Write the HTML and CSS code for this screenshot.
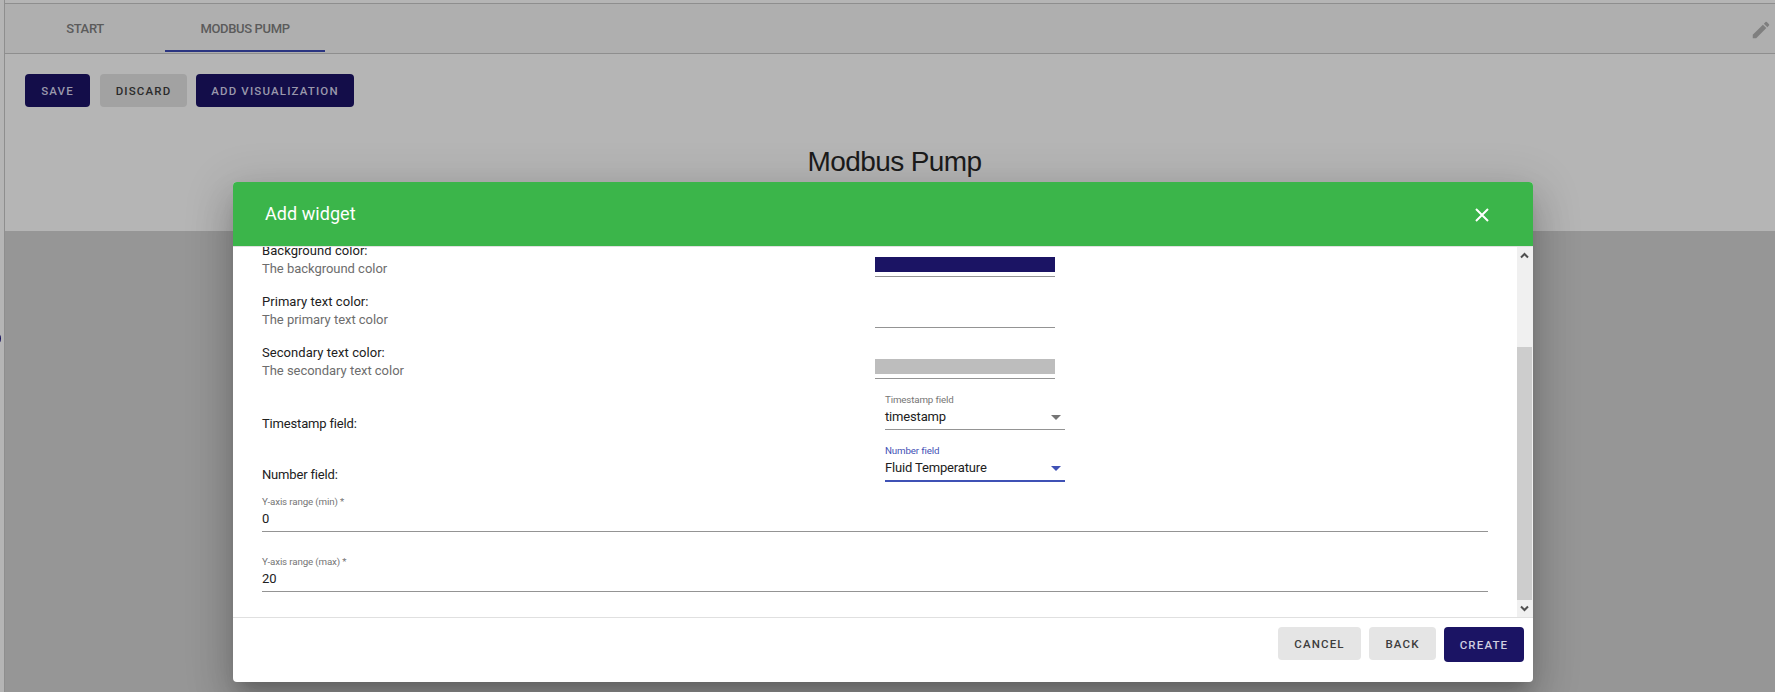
FILE: index.html
```html
<!DOCTYPE html>
<html lang="en">
<head>
<meta charset="utf-8">
<title>Modbus Pump</title>
<link rel="stylesheet" href="styles.css">
</head>
<body>
<div class="page">
  <span class="edge-mark"></span>
  <nav class="tabs">
    <div class="tab start"><span>START</span></div>
    <div class="tab active"><span>MODBUS PUMP</span></div>
    <svg class="edit" viewBox="0 0 24 24"><path d="M3 17.25V21h3.75L17.81 9.94l-3.75-3.75L3 17.25zM20.71 7.04a1 1 0 0 0 0-1.41l-2.34-2.34a1 1 0 0 0-1.41 0l-1.83 1.83 3.75 3.75 1.83-1.83z"/></svg>
  </nav>
  <div class="toolbar">
    <button class="btn dim-primary save"><span>SAVE</span></button>
    <button class="btn dim-basic discard"><span>DISCARD</span></button>
    <button class="btn dim-primary add"><span>ADD VISUALIZATION</span></button>
  </div>
  <h1 class="title"><span>Modbus Pump</span></h1>
  <div class="canvas"></div>
</div>

<div class="dialog">
  <header class="dialog-head">
    <h2><span>Add widget</span></h2>
    <svg class="close" viewBox="0 0 14 14"><path d="M1 1l12 12M13 1L1 13"/></svg>
  </header>
  <div class="dialog-body">
    <div class="form">
      <div class="row">
        <div class="label"><b>Background color:</b><i>The background color</i></div>
        <div class="color"><div class="swatch navy"></div></div>
      </div>
      <div class="row">
        <div class="label"><b>Primary text color:</b><i>The primary text color</i></div>
        <div class="color"><div class="swatch white"></div></div>
      </div>
      <div class="row">
        <div class="label"><b>Secondary text color:</b><i>The secondary text color</i></div>
        <div class="color"><div class="swatch gray"></div></div>
      </div>
      <div class="row">
        <div class="label single"><b>Timestamp field:</b></div>
        <div class="select"><small>Timestamp field</small><div class="value"><span>timestamp</span><em class="arrow"></em></div></div>
      </div>
      <div class="row">
        <div class="label single"><b>Number field:</b></div>
        <div class="select focused"><small>Number field</small><div class="value"><span>Fluid Temperature</span><em class="arrow"></em></div></div>
      </div>
      <div class="input"><small>Y-axis range (min) *</small><span>0</span></div>
      <div class="input"><small>Y-axis range (max) *</small><span>20</span></div>
    </div>
    <div class="scrollbar">
      <svg viewBox="0 0 9 7"><path d="M1 5.5l3.5-3.5L8 5.5"/></svg>
      <div class="thumb"></div>
      <svg viewBox="0 0 9 7"><path d="M1 1.5L4.500 5L8 1.500"/></svg>
    </div>
  </div>
  <footer class="dialog-foot">
    <button class="btn basic cancel"><span>CANCEL</span></button>
    <button class="btn basic back"><span>BACK</span></button>
    <button class="btn primary create"><span>CREATE</span></button>
  </footer>
</div>
</body>
</html>
```
FILE: styles.css
```css
* { box-sizing: border-box; }
body { margin: 0; width: 1775px; height: 692px; overflow: hidden; background: #b5b5b5; font-family: Roboto, sans-serif; position: relative; }
.page { margin: 0 0 0 4px; height: 692px; border-left: 1px solid #8e8e8e; display: flex; flex-direction: column; padding-top: 3px; }
.edge-mark { position: absolute; left: -5px; top: 334px; width: 6px; height: 9px; border-radius: 50%; background: #16105a; }
.tabs { height: 51px; flex: none; background: #afafaf; border-top: 1px solid #8e8e8e; border-bottom: 1px solid #8e8e8e; display: flex; align-items: flex-start; }
.tab { width: 160px; height: 48px; display: flex; align-items: center; justify-content: center; font-size: 13px; font-weight: 500; color: #5b5b5b; letter-spacing: -.35px; }
.tab.active { border-bottom: 2px solid #2b3581; padding-top: 2px; }
.edit { width: 22px; height: 22px; margin: 15px 3px 0 auto; fill: #7f7f7f; }
.toolbar { display: flex; padding: 20px 0 0 20px; }
.btn { border: 0; border-radius: 4px; height: 33px; padding: 0; display: flex; align-items: center; justify-content: center; font: 500 11.5px Roboto, sans-serif; letter-spacing: 1.15px; white-space: nowrap; }
.dim-primary { background: #130d49; color: #9a98ac; }
.dim-basic { background: #a2a2a2; color: #2b2b2b; }
.save { width: 65px; }
.discard { width: 87px; margin-left: 10px; }
.add { width: 158px; margin-left: 9px; }
.title { margin: 38px 0 0; padding-left: 9px; height: 34px; text-align: center; font: 400 28px/34px "Liberation Sans", sans-serif; letter-spacing: -.6px; color: #1b1b1b; }
.canvas { margin-top: 52px; flex: 1; background: #969696; }

.dialog { position: absolute; left: 233px; top: 182px; width: 1300px; height: 500px; border-radius: 4px; overflow: hidden; background: #fff; display: flex; flex-direction: column; box-shadow: 0 11px 15px -7px rgba(0,0,0,.2), 0 24px 38px 3px rgba(0,0,0,.14), 0 9px 46px 8px rgba(0,0,0,.12); }
.dialog-head { height: 65px; flex: none; background: #3bb54a; border-bottom: 1px solid #e0e0e0; display: flex; justify-content: space-between; padding: 0 44.5px 0 32px; }
h2 { margin: 20px 0 0; font: 400 18px/24px Roboto, sans-serif; color: #fff; letter-spacing: .05px; }
.close { width: 14px; height: 14px; margin-top: 26px; stroke: #fff; stroke-width: 2; fill: none; }
.dialog-body { height: 370px; flex: none; overflow: hidden; display: flex; justify-content: space-between; }
.form { width: 1255px; padding-left: 29px; margin-top: -5px; }
.row { height: 51px; display: grid; grid-template-columns: 613px 1fr; }
.label { font-size: 13px; line-height: 18px; letter-spacing: .05px; }
.label b, .label i { display: block; font-weight: 400; font-style: normal; color: #212121; }
.label i { color: #6d6d6d; letter-spacing: -.03px; }
.label.single { padding-top: 20px; letter-spacing: -.17px; }
.color { width: 180px; height: 35px; border-bottom: 1px solid #949494; padding-top: 15px; }
.swatch { height: 15px; }
.navy { background: #1b1464; }
.white { background: #fff; }
.gray { background: #bdbdbd; }
.select { width: 180px; height: 35px; margin-left: 10px; border-bottom: 1px solid #949494; font-size: 13px; color: #212121; letter-spacing: -.16px; }
.select small, .input small { display: block; font-size: 9.75px; line-height: 10px; margin-bottom: 3px; color: #757575; letter-spacing: -.14px; }
.value { display: flex; justify-content: space-between; align-items: center; line-height: 18px; padding: 0 4px 0 0; }
.arrow { border: 5px solid transparent; border-top-color: #757575; border-bottom: 0; }
.focused { border-bottom: 2px solid #3f51b5; height: 36px; }
.focused small { color: #3f51b5; }
.focused .arrow { border-top-color: #3f51b5; }
.input { height: 35px; margin-bottom: 25px; border-bottom: 1px solid #949494; font-size: 13px; line-height: 18px; color: #212121; letter-spacing: -.16px; }
.scrollbar { width: 16px; background: #f0f0f0; display: flex; flex-direction: column; align-items: flex-start; }
.scrollbar svg { width: 9px; height: 7px; margin: 5px 0 0 3px; fill: none; stroke: #505050; stroke-width: 2; }
.thumb { width: 15px; height: 253px; margin-top: 88px; background: #cdcdcd; }
.dialog-foot { flex: 1; border-top: 1px solid #e0e0e0; display: flex; justify-content: flex-end; padding: 9px 9px 0 0; gap: 8px; }
.basic { background: #e5e5e5; color: #3d3d3d; }
.primary { background: #1b1464; color: #d0cee0; }
.cancel { width: 83px; }
.back { width: 67px; }
.create { width: 80px; height: 35px; }
```
